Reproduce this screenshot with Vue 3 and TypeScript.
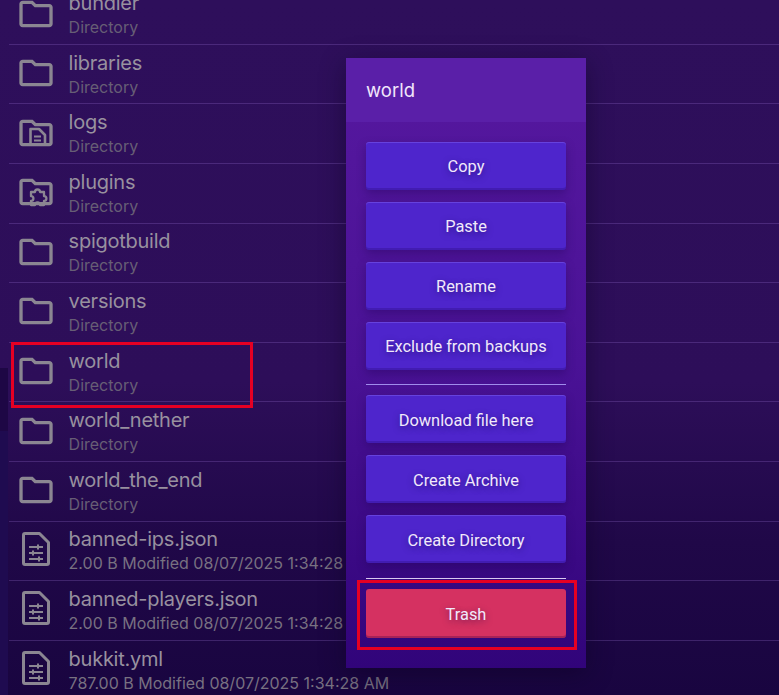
<script setup lang="ts">
type Row = { name: string; sub: string; icon: 'folder' | 'logs' | 'plugin' | 'file' }
const rows: Row[] = [
  { name: 'bundler', sub: 'Directory', icon: 'folder' },
  { name: 'libraries', sub: 'Directory', icon: 'folder' },
  { name: 'logs', sub: 'Directory', icon: 'logs' },
  { name: 'plugins', sub: 'Directory', icon: 'plugin' },
  { name: 'spigotbuild', sub: 'Directory', icon: 'folder' },
  { name: 'versions', sub: 'Directory', icon: 'folder' },
  { name: 'world', sub: 'Directory', icon: 'folder' },
  { name: 'world_nether', sub: 'Directory', icon: 'folder' },
  { name: 'world_the_end', sub: 'Directory', icon: 'folder' },
  { name: 'banned-ips.json', sub: '2.00 B Modified 08/07/2025 1:34:28 AM', icon: 'file' },
  { name: 'banned-players.json', sub: '2.00 B Modified 08/07/2025 1:34:28 AM', icon: 'file' },
  { name: 'bukkit.yml', sub: '787.00 B Modified 08/07/2025 1:34:28 AM', icon: 'file' },
]
const groupA = ['Copy', 'Paste', 'Rename', 'Exclude from backups']
const groupB = ['Download file here', 'Create Archive', 'Create Directory']
const folderPath =
  'M9.17 6l2 2H20v10H4V6h5.17M10 4H4c-1.1 0-1.99.9-1.99 2L2 18c0 1.1.9 2 2 2h16c1.1 0 2-.9 2-2V8c0-1.1-.9-2-2-2h-8l-2-2z'
</script>

<template>
  <div class="page">
    <div class="list">
      <div v-for="r in rows" :key="r.name" class="row">
        <svg class="icon" viewBox="0 0 40 40" fill="none" stroke="#8b8692" stroke-width="3" stroke-linejoin="round" stroke-linecap="butt">
          <template v-if="r.icon === 'file'">
            <path d="M9 3.5h14.5l9 9V33a1.5 1.5 0 0 1-1.5 1.5H9A1.5 1.5 0 0 1 7.5 33V5A1.5 1.5 0 0 1 9 3.5z" />
            <path d="M13 17h14M13 23h14M13 29h14" stroke-width="1.8" />
            <path d="M22 14.5v5M17 20.5v5M23 26.5v5" stroke-width="2" />
          </template>
          <template v-else>
            <path :d="folderPath" transform="scale(1.667)" fill="#8b8692" stroke="none" />
            <path v-if="r.icon === 'logs'" d="M14.5 32V16h8.5l6 6v10" stroke-width="2.6" />
            <path v-if="r.icon === 'logs'" d="M18 23.5h7M18 27.5h7" stroke-width="2" />
            <path
              v-if="r.icon === 'plugin'"
              d="M15 20h4a2.5 2.5 0 0 1 5 0h4v4.2a2.4 2.4 0 0 1 0 4.8V33h-4a2.5 2.5 0 0 0-5 0h-4v-4a2.4 2.4 0 0 0 0-4.8z"
              stroke-width="2.3"
            />
          </template>
        </svg>
        <div class="meta">
          <div class="name">{{ r.name }}</div>
          <div class="sub">{{ r.sub }}</div>
        </div>
      </div>
    </div>

    <div class="edge"></div>
    <div class="edge edge-low"></div>

    <aside class="modal">
      <header class="head">world</header>
      <div class="body">
        <button v-for="b in groupA" :key="b" class="btn">{{ b }}</button>
        <hr class="rule" />
        <button v-for="b in groupB" :key="b" class="btn low">{{ b }}</button>
        <hr class="rule rule-b" />
        <button class="btn low danger">Trash</button>
      </div>
    </aside>

    <div class="mark mark-row"></div>
    <div class="mark mark-trash"></div>
  </div>
</template>

<style>
html, body { margin: 0; background: #1c0744; }
</style>

<style scoped>
.page {
  position: relative;
  width: 779px;
  height: 695px;
  overflow: hidden;
  background: linear-gradient(180deg, #2e0f5b 0%, #2d0e59 55%, #200848 78%, #190540 100%);
}
.list {
  margin-top: -14.8px;
  padding-left: 9px;
}
.row {
  box-sizing: border-box;
  height: 59.6px;
  display: flex;
  align-items: center;
  border-bottom: 1px solid rgba(150, 110, 210, 0.28);
}
.icon {
  width: 40px;
  height: 40px;
  margin: -2px 12.6px 0 7px;
  flex: none;
}
.meta {
  display: flex;
  flex-direction: column;
  padding-top: 1px;
  font-family: Inter, "Liberation Sans", sans-serif;
}
.name {
  font-size: 20px;
  line-height: 24px;
  letter-spacing: -0.25px;
  color: #98919f;
  white-space: nowrap;
}
.sub {
  font-size: 16px;
  line-height: 24px;
  color: #675e75;
  white-space: nowrap;
}
.row:nth-child(n + 10) .sub { color: #787181; }
.edge {
  position: absolute;
  left: 0;
  top: 368px;
  width: 8px;
  height: 63px;
  background: #1e0745;
}
.edge-low {
  top: 431px;
  height: 264px;
  background: #1f0b50;
}
.modal {
  position: absolute;
  left: 346px;
  top: 58px;
  width: 240px;
  height: 610px;
  display: flex;
  flex-direction: column;
  background: linear-gradient(180deg, #56189f 0%, #4a1296 50%, #31047a 100%);
  box-shadow: 0 6px 24px rgba(10, 0, 30, 0.45);
  font-family: Roboto, sans-serif;
}
.head {
  height: 64px;
  box-sizing: border-box;
  padding: 0 20px;
  display: flex;
  align-items: center;
  background: #5a1fa8;
  color: #f1e6fb;
  font-family: Inter, sans-serif;
  font-size: 18.5px;
}
.body {
  padding: 20px;
  display: flex;
  flex-direction: column;
  gap: 12px;
}
.btn {
  height: 48px;
  padding: 0;
  border: 0;
  border-radius: 3px;
  background: #4e25cc;
  box-shadow: inset 0 1px 0 rgba(150, 120, 255, 0.35), inset 0 -2px 0 rgba(40, 10, 120, 0.3), 0 4px 10px rgba(30, 0, 80, 0.35);
  color: #f1e9fb;
  font-family: Roboto, sans-serif;
  font-size: 16.4px;
  text-shadow: 0 2px 6px rgba(20, 0, 70, 0.5);
}
.low {
  padding-top: 2px;
}
.danger {
  height: 49px;
  background: #d53161;
  box-shadow: inset 0 -2px 0 rgba(120, 20, 80, 0.5);
}
.rule {
  height: 1px;
  margin: 2px 0 -2px;
  border: 0;
  background: #a08cec;
}
.rule-b {
  margin: 3px 0 -2px;
  background: #d9c8f0;
}
.mark {
  position: absolute;
  box-sizing: border-box;
  border: 3px solid #e60023;
}
.mark-row {
  left: 11px;
  top: 342px;
  width: 242px;
  height: 66px;
}
.mark-trash {
  left: 357px;
  top: 580px;
  width: 220px;
  height: 70px;
}
</style>
